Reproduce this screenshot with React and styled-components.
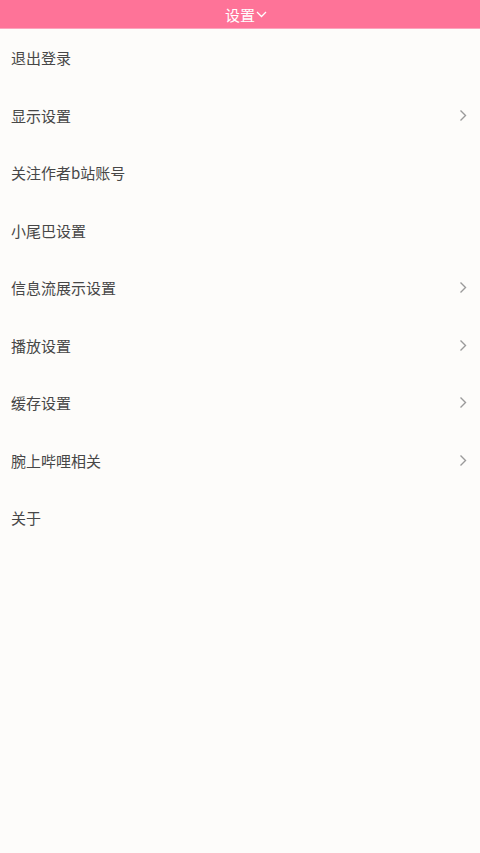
import React from "react";
import styled, { createGlobalStyle } from "styled-components";

const Global = createGlobalStyle`
  html, body { margin: 0; padding: 0; background: #fdfcfa; }
  body { font-family: "Noto Sans CJK SC", "Noto Sans", sans-serif; }
`;

const Page = styled.div`
  width: 480px;
  height: 853px;
  display: flex;
  flex-direction: column;
  background: #fdfcfa;
  box-sizing: border-box;
`;

const Header = styled.div`
  height: 29px;
  flex: 0 0 29px;
  background: #fe7398;
  border-bottom: 1px solid #fca4bd;
  box-sizing: border-box;
  display: flex;
  align-items: center;
  justify-content: center;
  gap: 1px;
  padding-left: 12px;
  color: #fff;
  font-size: 15px;
`;

const Title = styled.span`
  line-height: 1;
`;

const List = styled.div`
  display: flex;
  flex-direction: column;
`;

const Row = styled.div`
  height: 57.5px;
  display: flex;
  align-items: center;
  justify-content: space-between;
  padding: 0 13px 0 11px;
  color: #474747;
  font-size: 15px;
`;

const Chev = () => (
  <svg width="8" height="13" viewBox="0 0 8 13" fill="none">
    <path d="M1.5 1.5 L6.5 6.5 L1.5 11.5" stroke="#9a9a9a" strokeWidth="1.4" />
  </svg>
);

const Down = () => (
  <svg width="11" height="7" viewBox="0 0 11 7" fill="none">
    <path d="M1 1 L5.5 5.5 L10 1" stroke="#fff" strokeWidth="1.3" />
  </svg>
);

const items = [
  ["退出登录", false],
  ["显示设置", true],
  ["关注作者b站账号", false],
  ["小尾巴设置", false],
  ["信息流展示设置", true],
  ["播放设置", true],
  ["缓存设置", true],
  ["腕上哔哩相关", true],
  ["关于", false],
];

export default function App() {
  return (
    <>
      <Global />
      <Page>
        <Header>
          <Title>设置</Title>
          <Down />
        </Header>
        <List>
          {items.map(([t, c]) => (
            <Row key={t}>
              <span>{t}</span>
              {c && <Chev />}
            </Row>
          ))}
        </List>
      </Page>
    </>
  );
}
